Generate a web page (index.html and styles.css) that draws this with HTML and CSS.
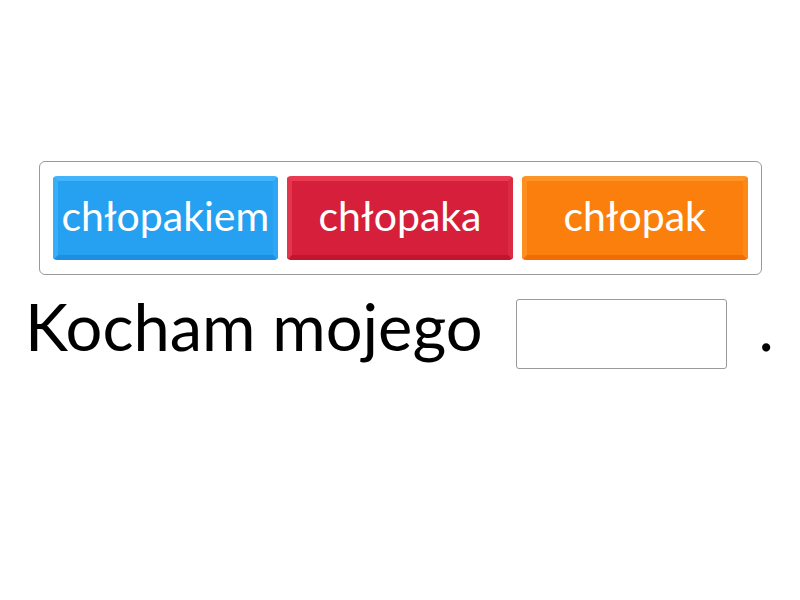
FILE: index.html
```html
<!DOCTYPE html>
<html lang="pl">
<head>
    <meta charset="UTF-8">
    <title>Kocham mojego</title>
    <link rel="stylesheet" href="styles.css">
</head>
<body>
    <div class="page">
        <div class="tray">
            <div class="tile tile-blue">chłopakiem</div>
            <div class="tile tile-red">chłopaka</div>
            <div class="tile tile-orange">chłopak</div>
        </div>
        <div class="sentence">
            <span class="words">Kocham mojego</span>
            <span class="gap-box"></span>
            <span class="dot">.</span>
        </div>
    </div>
</body>
</html>
```

FILE: styles.css
```css
body {
    margin: 0;
    background: #fff;
    font-family: 'Lato', 'Noto Sans', sans-serif;
}
.page {
    width: 800px;
    height: 600px;
    display: flex;
    flex-direction: column;
    align-items: center;
    padding-top: 161px;
    box-sizing: border-box;
}
.tray {
    width: 723px;
    height: 114px;
    box-sizing: border-box;
    border: 1px solid #9a9a9a;
    border-radius: 6px;
    display: flex;
    gap: 9px;
    padding: 14px 13px 13px 13px;
}
.tile {
    flex: 1;
    height: 84px;
    box-sizing: border-box;
    border-radius: 4px;
    border: 5px solid;
    color: #fff;
    font-size: 41px;
    display: flex;
    align-items: center;
    justify-content: center;
    padding-bottom: 6px;
    white-space: nowrap;
}
.tile-blue {
    background: #26a0f0;
    border-color: #42b4fb #2ea6f4 #1d8ee0 #38aef8;
}
.tile-red {
    background: #d61f3a;
    border-color: #e93a52 #dc2a42 #c2152e #e3354c;
}
.tile-orange {
    background: #fb7f0d;
    border-color: #fd9428 #fc8818 #ef6d04 #fd8e20;
}
.sentence {
    width: 800px;
    display: flex;
    align-items: flex-start;
    margin-top: 24px;
}
.words {
    font-size: 65px;
    margin-left: 25px;
    line-height: 70px;
    margin-top: -8px;
}
.gap-box {
    width: 211px;
    height: 70px;
    box-sizing: border-box;
    border: 1px solid #9a9a9a;
    border-radius: 3px;
    margin-left: 33px;
}
.dot {
    font-size: 65px;
    margin-left: 32px;
    line-height: 70px;
    margin-top: -8px;
}
```
